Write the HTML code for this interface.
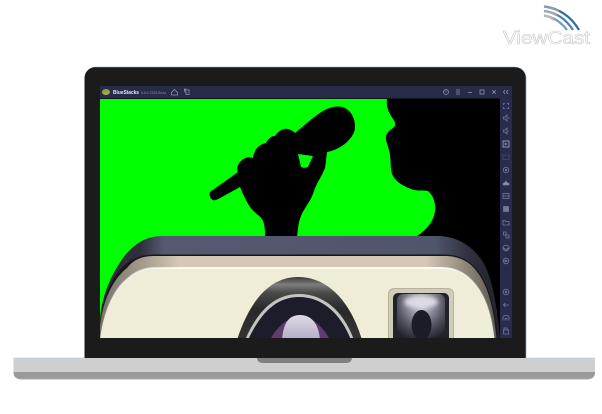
<!DOCTYPE html>
<html>
<head>
<meta charset="utf-8">
<style>
html,body{margin:0;padding:0;background:#fff;width:602px;height:414px;overflow:hidden}
svg{display:block}
text{font-family:"Liberation Sans",sans-serif}
</style>
</head>
<body>
<svg width="602" height="414" viewBox="0 0 602 414" xmlns="http://www.w3.org/2000/svg">
<defs>
<filter id="soft" x="-5%" y="-5%" width="110%" height="110%"><feGaussianBlur stdDeviation=".35"/></filter>
<filter id="soft2" x="-20%" y="-20%" width="140%" height="140%"><feGaussianBlur stdDeviation="2"/></filter>
<linearGradient id="band" x1="0" x2="1" y1="0" y2="0">
<stop offset="0" stop-color="#2c2c3a"/><stop offset=".1" stop-color="#2e2e3c"/><stop offset=".16" stop-color="#555a70"/><stop offset=".84" stop-color="#50556b"/><stop offset=".92" stop-color="#30303f"/><stop offset="1" stop-color="#22222c"/>
</linearGradient>
<linearGradient id="tan" x1="0" x2="1" y1="0" y2="0">
<stop offset="0" stop-color="#77726a"/><stop offset=".1" stop-color="#a09887"/><stop offset=".2" stop-color="#d6c8b6"/><stop offset=".82" stop-color="#d6c8b6"/><stop offset=".92" stop-color="#8f8878"/><stop offset="1" stop-color="#5a5850"/>
</linearGradient>
<linearGradient id="hl" x1="100" x2="500" y1="0" y2="0" gradientUnits="userSpaceOnUse">
<stop offset="0" stop-color="#fff" stop-opacity="0"/><stop offset=".1" stop-color="#fff" stop-opacity=".6"/><stop offset=".2" stop-color="#fff"/><stop offset=".85" stop-color="#fff"/><stop offset=".95" stop-color="#fff" stop-opacity=".3"/><stop offset="1" stop-color="#fff" stop-opacity="0"/>
</linearGradient>
<linearGradient id="metal" x1="0" x2="0" y1="0" y2="1">
<stop offset="0" stop-color="#3a3a3a"/><stop offset=".12" stop-color="#7d7d7d"/><stop offset=".25" stop-color="#4a4a4a"/><stop offset=".5" stop-color="#2a2a2a"/><stop offset="1" stop-color="#333"/>
</linearGradient>
<radialGradient id="vf" cx=".5" cy=".2" r=".75">
<stop offset="0" stop-color="#d8d8e2"/><stop offset=".3" stop-color="#9a9aaa"/><stop offset=".65" stop-color="#555562"/><stop offset="1" stop-color="#23232c"/>
</radialGradient>
<linearGradient id="core" x1="0" x2="0" y1="0" y2="1">
<stop offset="0" stop-color="#dfdae4"/><stop offset="1" stop-color="#b3acc6"/>
</linearGradient>
<clipPath id="scr"><rect x="100" y="99" width="400" height="239"/></clipPath>
</defs>

<!-- logo -->
<g fill="none" stroke-linecap="butt" filter="url(#soft)">
<path d="M544 6.500C558 8 571 16 579 30" stroke="#2f6ca6" stroke-width="2.200"/>
<path d="M544 11C556 12.500 566 19 573 30" stroke="#4a82b4" stroke-width="2.200"/>
<path d="M544 15.500C553 17 561 22 567 30" stroke="#6f9cc0" stroke-width="2.200"/>
<path d="M544 6.500C550 7 555 9 559 11" stroke="#8e9aa4" stroke-width="2.200"/>
<path d="M544 11C549 11.500 553 13 557 15.500" stroke="#a0a8ae" stroke-width="2.200"/>
<path d="M544 15.500C548 16 551 17.500 554 20" stroke="#b4babd" stroke-width="2.200"/>
</g>
<text x="503" y="44" font-size="18" textLength="87" lengthAdjust="spacingAndGlyphs" fill="#fff" stroke="#cacaca" stroke-width=".6">ViewCast</text>

<!-- laptop base -->
<path d="M13.500 358H595V373a6 6 0 0 1-6 6H19.500a6 6 0 0 1-6-6Z" fill="#9a9a9a"/>
<path d="M13.500 358H595V372H13.500Z" fill="#cfcfcf"/>
<path d="M19.500 379.200H589" stroke="#a9bfd2" stroke-width=".8" fill="none"/>
<path d="M13.500 358H85M526 358H595" stroke="#bcd6ea" stroke-width=".8" fill="none"/>
<path d="M257 357H352V358a5 5 0 0 1-5 5H262a5 5 0 0 1-5-5Z" fill="#808080"/>

<!-- bezel -->
<path d="M84.500 358V78a11 11 0 0 1 11-11H515a11 11 0 0 1 11 11V358Z" fill="#1b1b1b"/>
<path d="M95.500 67H515a11 11 0 0 1 11 11V358" fill="none" stroke="#8fb0c6" stroke-width=".6"/>

<!-- title bar + sidebar -->
<rect x="100" y="86" width="412" height="13" fill="#272b48"/>
<rect x="100" y="98" width="400" height="1" fill="#141626"/>
<rect x="500" y="99" width="12" height="239" fill="#272b4c"/>

<!-- screen -->
<g clip-path="url(#scr)">
<rect x="100" y="99" width="400" height="239" fill="#00ff00"/>
<path d="M387 99C386 105 388 111 391 116C394 120 396 123 395 126C393 129 387 131 386 136C385 141 389 147 390 155C391 163 390 170 393 176C397 183 405 187 414 190C420 191 425 190 428 191C433 195 436 203 435 211C434 220 428 229 417 236L417 338H500V99Z" fill="#000"/>
<path fill-rule="evenodd" fill="#000" d="M210 192C209 195 210 199 213 200C215 201 218 199 222 197L240 187C243 194 246 201 250 207C254 213 261 216 263 221C265 226 265 231 265 237H297C298 230 298 223 301 216C304 208 311 201 314 191C317 182 322 176 325 168C326 163 326 159 327 152C333 151 340 148 346 143C351 138 355 133 355 127C355 119 352 112 345 108C338 105 330 107 323 111C313 117 305 125 295 133C292 130 288 128 284 129C280 130 277 133 275 136C271 136 268 139 266 143C261 144 257 147 255 151C254 154 253 156 253 158C248 156 244 158 241 161C238 164 236 168 238 172Z M298 154L313 156L308 167C305 168 303 168 301 167Z"/>

<!-- camera body -->
<g filter="url(#soft)">
<path d="M100 322C100 300 111 272 127 253C137 242 148 236 162 236H437C456 236 472 245 483 262C492 277 497 305 500 338V345H100Z" fill="url(#band)"/>
<path d="M100 322C103 296 113 274 127 263C135 257 144 254.500 155 254.500H445C458 254.500 470 260 479 272C490 287 496 312 498 345H100Z" fill="#16161c"/>
<path d="M100 326C103 300 113 279 127 268C135 258 144 256 155 256H445C458 256 470 261 478 273C489 288 495 313 497 345H100Z" fill="url(#tan)"/>
<path d="M100 340C103 314 112 291 127 279C136 271 145 268 156 268H442C455 268 466 273 475 284C487 298 493 319 495 345H100Z" fill="#efecd8"/>
<path d="M100 340C103 314 112 291 127 279C136 271 145 268 156 268H442C455 268 466 273 475 284C487 298 493 319 495 345" fill="none" stroke="url(#hl)" stroke-width="1.800"/>

<!-- lens -->
<path d="M237 340C250 300 270 277 298 277C327 277 350 300 362 340Z" fill="url(#metal)"/>
<path d="M245 340C258 310 275 294 299 294C323 294 343 310 354 340Z" fill="#c3c4c0"/>
<path d="M248 340C261 312 277 297 299 297C321 297 340 312 351 340Z" fill="#1d1a2a"/>
<path d="M270 340C274 332 279 326 286 321L314 321C321 326 326 332 330 340Z" fill="#5e3a6e"/>
<path d="M282 340C283 326 287 315 300 315C313 315 319 326 320 340Z" fill="url(#core)"/>

<!-- viewfinder -->
<rect x="388" y="288" width="66" height="60" rx="6" fill="#b5b19c"/>
<rect x="389" y="289" width="64" height="58" rx="5" fill="#cfccb8"/>
<rect x="393" y="293" width="56" height="55" rx="5" fill="#22222b"/>
<rect x="397" y="294" width="48" height="50" rx="6" fill="url(#vf)"/>
<ellipse cx="421" cy="302" rx="17" ry="6" fill="#dcdce6" filter="url(#soft2)"/>
<ellipse cx="421.500" cy="325" rx="10" ry="15" fill="#1f1d26"/>
</g>
</g>

<!-- title bar content -->
<g filter="url(#soft)">
<ellipse cx="106" cy="92" rx="4" ry="3" fill="#8aa838"/>
<path d="M102 92.500C104 95.500 108 95.500 110 92.500C108 93.500 104 93.500 102 92.500Z" fill="#d2a13a"/>
<text x="113" y="94" font-size="5.200" font-weight="bold" fill="#e6e6ee" textLength="26" lengthAdjust="spacingAndGlyphs">BlueStacks</text>
<text x="141" y="94" font-size="3.800" fill="#8f90a8" textLength="16" lengthAdjust="spacingAndGlyphs">5.0.0.7228</text>
<text x="158" y="94" font-size="3.800" fill="#a8708a" textLength="8" lengthAdjust="spacingAndGlyphs">Beta</text>

<g fill="none" stroke="#8e91a8" stroke-width=".8">
<path d="M171.500 92.500L174.500 89.500L177.500 92.500V95H171.500Z"/>
<path d="M185 90H189V94.500H186V92H185Z M186 90V89H184.500V91.500"/>
<circle cx="446" cy="92" r="2.500"/>
<path d="M446 90.500V92.500"/>
<path d="M456 90H460M456 92H460M456 94H460"/>
<path d="M468 92.500H472"/>
<rect x="480" y="90" width="4" height="4"/>
<path d="M492.300 90.300L495.700 93.700M495.700 90.300L492.300 93.700"/>
<path d="M505 90L503.500 92L505 94M508 90L506.500 92L508 94"/>
</g>

<!-- sidebar icons -->
<g fill="none" stroke="#74779a" stroke-width=".8">
<path d="M503.500 105V103.500H505M507 103.500H508.500V105M508.500 107V108.500H507M505 108.500H503.500V107"/>
<path d="M503.500 117H505L507 115V121L505 119H503.500ZM508 118H509.500"/>
<path d="M503.500 130H505L507 128V134L505 132H503.500ZM508 131H509"/>
<rect x="503" y="141" width="6" height="6" stroke="#a8abc4"/>
<path d="M505 143L507 144L505 145Z" fill="#a8abc4"/>
<rect x="503" y="155" width="6" height="4.500" stroke="#474a68"/>
<circle cx="506" cy="170" r="2.700"/>
<circle cx="506" cy="170" r=".7" fill="#8e91ad"/>
<path d="M503 185H509V183.500L507 182.500L506 181L505 182.500L503 183.500Z" fill="#8e91ad"/>
<rect x="503" y="193.500" width="6" height="5"/>
<path d="M503 196H509"/>
<rect x="503.500" y="206.500" width="5" height="5" fill="#74779a"/>
<path d="M503 220.500H505L505.500 221.500H509V225H503Z"/>
<path d="M503.500 232H506V235H503.500ZM506 235H509V238H506Z"/>
<ellipse cx="506" cy="248" rx="3" ry="2.800"/>
<path d="M503 248L506 249.500L509 248"/>
<circle cx="506" cy="261" r="2.800"/>
<path d="M505 260L507 261L505 262Z"/>
<circle cx="506" cy="292" r="2.800"/>
<circle cx="506" cy="292" r=".8"/>
<path d="M509 305H503.500M505.500 303L503.500 305L505.500 307"/>
<path d="M503 320.500V317.500C503 316 504.500 315.500 506 315.500C507.500 315.500 509 316 509 317.500V320.500M505 320.500V318.500H507V320.500"/>
<path d="M503.500 330H508.500V334H503.500ZM504 330V328H507L507.500 330"/>
</g>
</g>
</svg>
</body>
</html>
